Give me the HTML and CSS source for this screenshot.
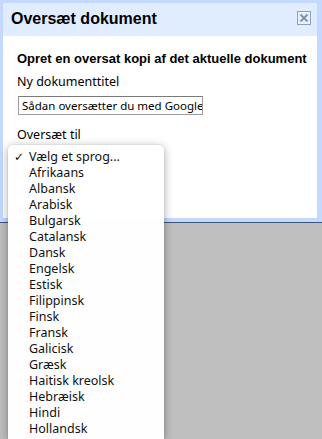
FILE: index.html
```html
<!DOCTYPE html>
<html>
<head>
<meta charset="utf-8">
<link rel="stylesheet" href="styles.css">
</head>
<body>
<div class="dialog">
  <div class="titlebar">
    <span class="title">Oversæt dokument</span>
    <span class="close"><svg width="14" height="14" viewBox="0 0 14 14"><rect x="0.5" y="0.5" width="13" height="13" fill="#e8f0fe" stroke="#8d9fc1"/><path d="M3.5 3.5 L10.5 10.5 M10.5 3.5 L3.5 10.5" stroke="#7f92b6" stroke-width="2"/></svg></span>
  </div>
  <div class="content">
    <div class="heading">Opret en oversat kopi af det aktuelle dokument</div>
    <div class="label">Ny dokumenttitel</div>
    <div class="input">Sådan oversætter du med Google</div>
    <div class="label label2">Oversæt til</div>
    <div class="ghost-row"></div>
    <div class="ghost-button"></div>
  </div>
</div>
<div class="menu">
  <div class="item"><span class="check">✓</span>Vælg et sprog...</div>
  <div class="item">Afrikaans</div>
  <div class="item">Albansk</div>
  <div class="item">Arabisk</div>
  <div class="item">Bulgarsk</div>
  <div class="item">Catalansk</div>
  <div class="item">Dansk</div>
  <div class="item">Engelsk</div>
  <div class="item">Estisk</div>
  <div class="item">Filippinsk</div>
  <div class="item">Finsk</div>
  <div class="item">Fransk</div>
  <div class="item">Galicisk</div>
  <div class="item">Græsk</div>
  <div class="item">Haitisk kreolsk</div>
  <div class="item">Hebræisk</div>
  <div class="item">Hindi</div>
  <div class="item">Hollandsk</div>
</div>
</body>
</html>
```
FILE: styles.css
```css
html, body {
  margin: 0;
  padding: 0;
}
body {
  background: #bfbfbf;
  width: 322px;
  height: 439px;
  overflow: hidden;
  position: relative;
  font-family: "Noto Sans", "DejaVu Sans", sans-serif;
  color: #000;
}
.dialog {
  background: #c3d9ff;
  padding: 3px 5px 4px 3px;
  border-bottom: 1px solid #3d5577;
}
.titlebar {
  background: #e0ecff;
  height: 33px;
  display: flex;
  align-items: center;
  justify-content: space-between;
  padding: 0 6px 0 8px;
}
.title {
  font-family: "Liberation Sans", Arial, sans-serif;
  font-weight: bold;
  font-size: 16px;
  margin-top: -1px;
}
.close {
  display: flex;
  margin-top: -3px;
}
.content {
  background: #fff;
  height: 182px;
  padding: 15px 0 0 14px;
  box-sizing: border-box;
}
.heading {
  font-family: "Liberation Sans", Arial, sans-serif;
  font-weight: bold;
  font-size: 13px;
  line-height: 16px;
}
.label {
  font-size: 12.5px;
  line-height: 16px;
  margin-top: 7px;
}
.label2 {
  margin-top: 12px;
}
.input {
  margin-top: 6px;
  margin-left: 1px;
  width: 185px;
  height: 19px;
  box-sizing: border-box;
  border: 1px solid #9a9a9a;
  border-top-color: #7a7a7a;
  font-size: 11.5px;
  line-height: 17px;
  padding-left: 3px;
  white-space: nowrap;
  overflow: hidden;
}
.ghost-row {
  height: 20px;
}
.ghost-button {
  margin-top: 16px;
  width: 92px;
  height: 14px;
  border: 1px solid #f2f2f2;
  border-radius: 7px;
}
.menu {
  position: absolute;
  left: 8px;
  top: 145px;
  width: 156px;
  height: 294px;
  background: rgba(255, 255, 255, 0.985);
  border-radius: 5px 5px 0 0;
  box-shadow: 0 2px 10px rgba(0, 0, 0, 0.35), 0 0 1px rgba(0, 0, 0, 0.3);
  padding-top: 4px;
  box-sizing: border-box;
}
.item {
  height: 16px;
  line-height: 16px;
  font-size: 12.5px;
  padding-left: 21px;
  position: relative;
  color: #111;
}
.check {
  position: absolute;
  left: 6px;
  top: 0;
  font-size: 12px;
  font-weight: bold;
}
```
